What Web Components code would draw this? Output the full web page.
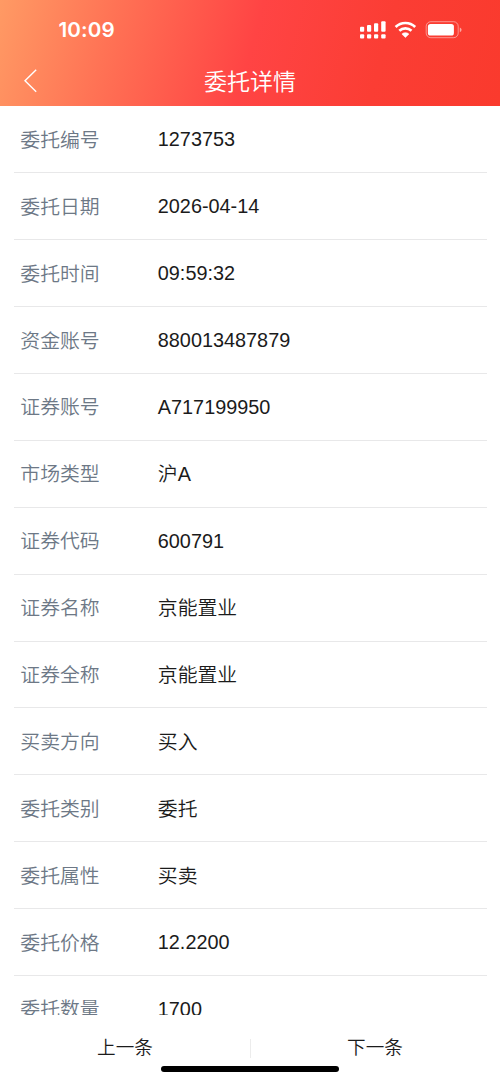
<!DOCTYPE html>
<html lang="zh-CN">
<head>
<meta charset="utf-8">
<meta name="viewport" content="width=device-width, initial-scale=1">
<title>委托详情</title>
<style>
html, body { margin: 0; height: 100%; background: #fff; }
body { font-family: "Liberation Sans", "Noto Sans CJK SC", sans-serif; color: #1c1c1e; }
</style>
</head>
<body>
<order-page></order-page>
<script>
const define = (name, html) => {
  const template = document.createElement('template');
  template.innerHTML = html;
  customElements.define(name, class extends HTMLElement {
    constructor() {
      super();
      this.attachShadow({ mode: 'open' }).append(template.content.cloneNode(true));
    }
  });
};

define('status-bar', `
<style>
:host { display: flex; height: 56px; box-sizing: border-box; padding: 4px 38px 0 58.5px; align-items: center; justify-content: space-between; color: #fff; }
.time { font: 600 20.6px/24px Inter, sans-serif; letter-spacing: .15px; }
svg { display: block; }
</style>
<span class="time">10:09</span>
<svg width="104" height="22" viewBox="0 0 104 22" fill="#fff">
  <rect x="2" y="7.7" width="4.2" height="5.1" rx="1"/><rect x="9" y="6" width="4.2" height="6.8" rx="1"/>
  <rect x="16" y="4.2" width="4.2" height="8.6" rx="1"/><rect x="23.2" y="2.2" width="4.4" height="10.6" rx="1"/>
  <rect x="2" y="15.2" width="4.2" height="4.4" rx="1"/><rect x="9" y="15.2" width="4.2" height="4.4" rx="1"/>
  <rect x="16" y="15.2" width="4.2" height="4.4" rx="1"/><rect x="23.2" y="15.2" width="4.4" height="4.4" rx="1"/>
  <path d="M37.6 7.9a14.2 14.2 0 0 1 19.6 0M41.3 11.7a9 9 0 0 1 12.2 0" fill="none" stroke="#fff" stroke-width="2.7"/>
  <path d="M47.4 18.4 43.9 15.1a5 5 0 0 1 7 0z" stroke="#fff" stroke-width=".6" stroke-linejoin="round"/>
  <rect x="68.2" y="2.7" width="32" height="16" rx="4.6" fill="none" stroke="#fff" stroke-opacity=".45" stroke-width="1"/>
  <rect x="69.9" y="4.9" width="26" height="11.6" rx="2.6"/>
  <path d="M101.8 8.4q1.8.8 1.8 2.4t-1.8 2.4z" opacity=".55"/>
</svg>`);

define('nav-bar', `
<style>
:host { display: grid; grid-template-columns: 60px 1fr 60px; height: 50px; align-items: center; color: #fff; }
svg { display: block; margin-left: 23px; }
.title { text-align: center; font-size: 23px; line-height: 48px; height: 50px; font-family: "Noto Sans CJK SC DemiLight", "Noto Sans CJK SC", sans-serif; font-weight: 350; }
</style>
<svg width="15" height="26" viewBox="0 0 15 26" fill="none" stroke="#fff" stroke-width="1.4"><path d="M13.2 1.8 2 12.8l11.2 11"/></svg>
<span class="title"><slot></slot></span>`);

define('detail-row', `
<style>
:host { display: grid; grid-template-columns: 137.5px 1fr; flex: none; height: 66.9px; box-sizing: border-box; margin: 0 13.5px; padding-left: 6.8px; align-items: center; border-bottom: 1px solid #e8e8e9; font-size: 19.85px; line-height: 30px; }
.label { color: #6d7886; font-weight: 350; padding-top: 1px; }
.value { color: #1b1b1b; font-weight: 350; }
:host([cjk]) .value { padding-top: 1px; }
</style>
<span class="label"><slot name="label"></slot></span><span class="value"><slot></slot></span>`);

define('pager-bar', `
<style>
:host { display: grid; grid-template-columns: 250px 1px 249px; grid-template-rows: 46px 21px; height: 67px; background: #fff; align-items: center; justify-items: center; color: #1b1b1b; font-size: 18.6px; line-height: 28px; font-weight: 350; }
span { padding-top: 20px; }
span:last-of-type { margin-left: -1px; }
i { width: 1px; height: 19px; margin-top: 21px; background: #ececec; }
.home { grid-column: 1 / 4; width: 178px; height: 6px; border-radius: 3px; background: #000; margin-top: -4px; align-self: center; }
</style>
<span><slot name="prev"></slot></span><i></i><span><slot name="next"></slot></span>
<div class="home"></div>`);

define('order-page', `
<style>
:host { display: flex; flex-direction: column; width: 500px; height: 1082px; overflow: hidden; background: #fff; }
header { flex: none; height: 106.4px; background: linear-gradient(105deg, #ff9a64 0%, #ff7355 22%, #ff4444 50%, #fb3d34 75%, #fa3a2d 100%); }
main { display: flex; flex-direction: column; height: 908.6px; overflow: hidden; flex: none; }
</style>
<header><status-bar></status-bar><nav-bar>委托详情</nav-bar></header>
<main></main>
<pager-bar><span slot="prev">上一条</span><span slot="next">下一条</span></pager-bar>`);

const fields = [
  ['委托编号', '1273753'], ['委托日期', '2026-04-14'], ['委托时间', '09:59:32'],
  ['资金账号', '880013487879'], ['证券账号', 'A717199950'], ['市场类型', '沪A'],
  ['证券代码', '600791'], ['证券名称', '京能置业'], ['证券全称', '京能置业'],
  ['买卖方向', '买入'], ['委托类别', '委托'], ['委托属性', '买卖'],
  ['委托价格', '12.2200'], ['委托数量', '1700']
];
const list = document.querySelector('order-page').shadowRoot.querySelector('main');
for (const [label, value] of fields) {
  const row = document.createElement('detail-row');
  const name = document.createElement('span');
  row.toggleAttribute('cjk', /[\u4e00-\u9fff]/.test(value));
  name.slot = 'label';
  name.textContent = label;
  row.append(name, value);
  list.append(row);
}
</script>
</body>
</html>
